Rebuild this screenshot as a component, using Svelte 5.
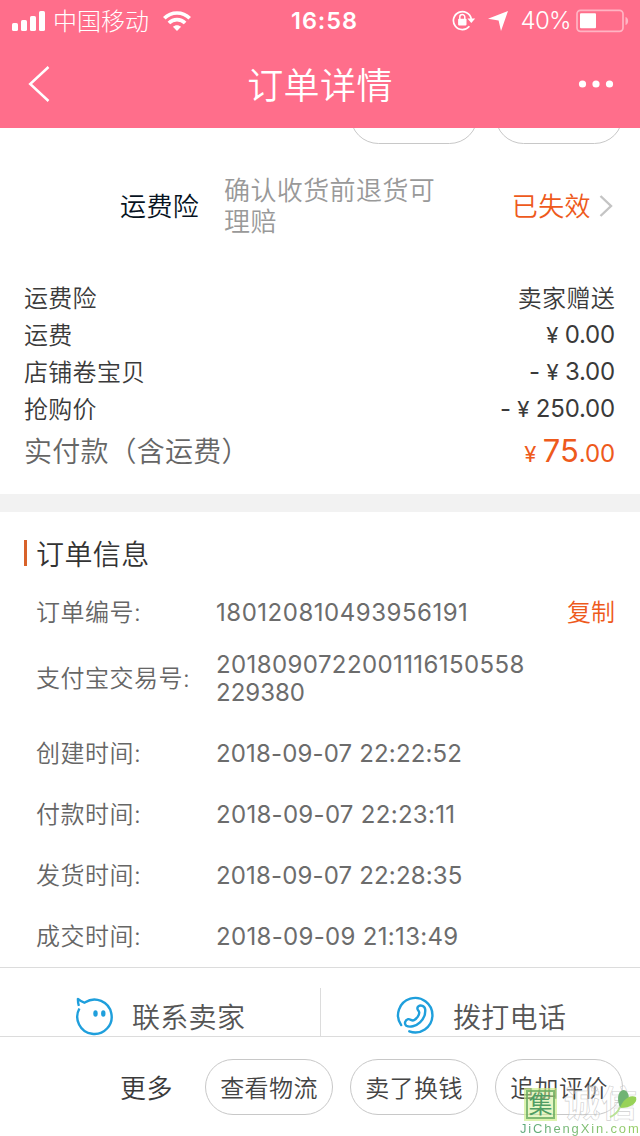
<script>
  const costs = [
    { label: '运费险', text: '卖家赠送' },
    { label: '运费', sign: '', amount: '0.00' },
    { label: '店铺卷宝贝', sign: '-', amount: '3.00' },
    { label: '抢购价', sign: '-', amount: '250.00' }
  ];
  const times = [
    { label: '创建时间:', value: '2018-09-07 22:22:52', track: 0.16 },
    { label: '付款时间:', value: '2018-09-07 22:23:11', track: 0.3 },
    { label: '发货时间:', value: '2018-09-07 22:28:35', track: 0.16 },
    { label: '成交时间:', value: '2018-09-09 21:13:49', track: 0.32 }
  ];
  const actions = ['查看物流', '卖了换钱', '追加评价'];
</script>

<div class="screen">
  <header>
    <div class="status">
      <div class="left">
        <svg width="33" height="20" viewBox="0 0 33 20" fill="#fff">
          <rect x="0" y="12" width="6" height="8" rx="1.6" />
          <rect x="9" y="9" width="6" height="11" rx="1.6" />
          <rect x="18" y="5" width="6" height="15" rx="1.6" />
          <rect x="27" y="0" width="6" height="20" rx="1.6" />
        </svg>
        <span class="carrier">中国移动</span>
        <svg class="wifi" width="28" height="20" viewBox="0 0 28 20" fill="none" stroke="#fff" stroke-width="3.7">
          <path d="M1.3 7.3C8.4 0.2 19.6 0.2 26.7 7.3" />
          <path d="M5.9 12C10.4 7.5 17.6 7.5 22.1 12" />
          <path d="M14 20l-4.1-4.2c2.3-2.2 5.9-2.2 8.2 0z" fill="#fff" stroke="none" />
        </svg>
      </div>
      <div class="clock">16:58</div>
      <div class="right">
        <svg width="24" height="22" viewBox="0 0 24 22" fill="none" stroke="#fff" stroke-width="1.7">
          <path d="M17.4 16.3A9 9 0 1 1 19.300 9" />
          <path d="M15.4 8.600h7.8l-3.9 4.4z" fill="#fff" stroke="none" />
          <rect x="6.100" y="8.800" width="8.400" height="6.600" rx=".8" fill="#fff" stroke="none" />
          <path d="M7.800 10V7a2.500 2.500 0 0 1 5 0V10" stroke-width="1.500" />
        </svg>
        <svg class="arrow" width="20" height="20" viewBox="0 0 20 20" fill="#fff"><path d="M20 0L13 20L10.6 9.4L0 7.8z" /></svg>
        <span class="percent">40%</span>
        <svg width="53" height="24" viewBox="0 0 53 24">
          <rect x="1" y="1.3" width="46" height="21" rx="3.5" fill="none" stroke="#ffb4c3" stroke-width="1.7" />
          <rect x="4" y="4.2" width="16" height="15" rx="1" fill="#fff" />
          <path d="M49.500 8C53 9 53 15 49.500 16z" fill="#ffb4c3" />
        </svg>
      </div>
    </div>
    <div class="nav">
      <svg width="24" height="40" viewBox="0 0 24 40" fill="none" stroke="#fff" stroke-width="2.5"><path d="M20.500 3L2.200 20L20.500 37" /></svg>
      <h1>订单详情</h1>
      <svg width="36" height="8" viewBox="0 0 36 8" fill="#fff"><circle cx="4.500" cy="4" r="3.600" /><circle cx="18" cy="4" r="3.600" /><circle cx="31.500" cy="4" r="3.600" /></svg>
    </div>
  </header>

  <div class="peek"><i></i><i></i></div>

  <section class="insurance">
    <b>运费险</b>
    <p>确认收货前退货可理赔</p>
    <em>已失效</em>
    <svg width="14" height="24" viewBox="0 0 14 24" fill="none" stroke="#c4c4c4" stroke-width="2.400"><path d="M1.500 2L12 12L1.500 22" /></svg>
  </section>

  <section class="costs">
    {#each costs as c}
      <div class="cost">
        <span class="cjk">{c.label}</span>
        {#if c.text}
          <span class="cjk">{c.text}</span>
        {:else}
          <span class="num">{c.sign}<span class="yen">¥</span>{c.amount}</span>
        {/if}
      </div>
    {/each}
    <div class="total">
      <span>实付款（含运费）</span>
      <span class="paid"><span class="yen">¥</span><strong>75</strong>.00</span>
    </div>
  </section>

  <div class="band"></div>

  <section class="info">
    <h2>订单信息</h2>
    <div class="row">
      <span class="label">订单编号:</span><span class="value id">180120810493956191</span><span class="copy">复制</span>
    </div>
    <div class="row trade">
      <span class="label">支付宝交易号:</span>
      <span class="value"><span class="first">2018090722001116150558</span><br />229380</span>
    </div>
    {#each times as t}
      <div class="row"><span class="label">{t.label}</span><span class="value" style="letter-spacing: {t.track}px">{t.value}</span></div>
    {/each}
  </section>

  <div class="contact">
    <div class="way">
      <svg width="40" height="40" viewBox="0 0 40 40" fill="none" stroke="#1f9fdc" stroke-width="2.400" stroke-linejoin="round">
        <path d="M4.400 12.500A17.200 17.200 0 1 0 10.200 6.300L9.300 6.700C7 6 5 4.600 2.900 2.900C2.900 5 3 7.500 3.900 9.900" />
        <ellipse cx="20.500" cy="17.500" rx="2.200" ry="3.300" fill="#1f9fdc" stroke="none" />
        <ellipse cx="28.300" cy="17.500" rx="2.200" ry="3.300" fill="#1f9fdc" stroke="none" />
      </svg>
      <span>联系卖家</span>
    </div>
    <div class="way">
      <svg width="40" height="40" viewBox="0 0 40 40" fill="none" stroke="#1f9fdc" stroke-width="2.400" stroke-linecap="round" stroke-linejoin="round">
        <path d="M5.200 29.100A17.200 17.200 0 1 1 13.300 35.300" />
        <path d="M22.300 10.400C24.600 8.700 28.800 9.800 29.200 13.500C29.600 18 27.500 23 24 26.400C20 30.300 13.500 31.700 10.300 29.700C7.800 27.700 9.300 23.900 12.100 23.200C14.400 22.700 15.600 25.300 18 24.200C20.800 22.700 23.600 18.600 23.200 16.200C22.800 14.400 19.700 13.100 22.300 10.400Z" />
      </svg>
      <span>拨打电话</span>
    </div>
  </div>

  <footer>
    <span class="more">更多</span>
    {#each actions as a}<button>{a}</button>{/each}
  </footer>

  <div class="mark">
    <div class="names">
      <span class="seal">集</span><span class="hollow">诚信</span>
      <svg class="leaf" width="30" height="32" viewBox="0 0 30 32">
        <path d="M11 20C8 12 8 4 14 2C19 2 21 8 19 13z" fill="#70b374" />
        <path d="M11 20C13 13 20 6 27 9C29 15 22 20 11 20z" fill="#98d258" />
        <path d="M11 19C9 24 6 27 1 29" fill="none" stroke="#b9e296" stroke-width="2" />
      </svg>
    </div>
    <div class="site">JiChengXin.com</div>
  </div>
</div>

<style>
  :global(body) { margin: 0; background: #fff; }
  .screen {
    position: relative; width: 640px; height: 1136px; overflow: hidden; background: #fff;
    font-family: Inter, "Noto Sans CJK SC", sans-serif; font-weight: 350; color: #3a3a3a;
    display: flex; flex-direction: column; box-sizing: border-box;
  }
  svg { display: block; flex: none; }
  h1, h2, p { margin: 0; font-weight: 350; }
  header { height: 128px; background: #ff6e8b; color: #fff; flex: none; }
  .status { height: 40px; display: grid; grid-template-columns: 1fr auto 1fr; align-items: center; padding: 0 12px; }
  .left, .right { display: flex; align-items: center; }
  .right { justify-content: flex-end; }
  .right svg:last-child { margin-right: -1px; }
  .carrier { font-size: 24px; line-height: 40px; padding-top: 1px; margin-left: 8px; font-weight: 300; }
  .wifi { margin-left: 14px; }
  .clock { font-size: 23.500px; font-weight: 600; line-height: 42px; letter-spacing: .9px; padding-left: 9px; }
  .arrow { margin: 0 0 1px 12px; }
  .percent { font-size: 24px; line-height: 42px; margin: 0 5px 0 12px; letter-spacing: -.6px; font-weight: 350; }
  .nav { height: 88px; display: flex; align-items: center; justify-content: space-between; padding: 0 26px 0 28px; }
  .nav h1 { font-size: 36px; line-height: 50px; letter-spacing: .4px; padding: 3px 0 0 10px; }
  .peek { height: 16px; overflow: hidden; display: flex; gap: 17px; padding-left: 350px; align-items: flex-end; flex: none; }
  .peek i { width: 126px; height: 55px; border: 1px solid #c8c8c8; border-radius: 29px; flex: none; }
  .insurance { height: 123px; display: flex; align-items: center; padding: 0 27px 0 120px; font-size: 26px; flex: none; }
  .insurance b { font-weight: 350; color: #07131f; width: 104px; padding-bottom: 3px; letter-spacing: .4px; }
  .insurance p { width: 216px; line-height: 31px; color: #999; letter-spacing: .4px; }
  .insurance em { font-style: normal; color: #ee5a1c; margin: 0 8px 0 auto; padding-bottom: 3px; letter-spacing: .4px; }
  .costs { padding: 12px 25px 0 24px; height: 215px; flex: none; }
  .cost { height: 37px; line-height: 39px; display: flex; justify-content: space-between; font-size: 24px; }
  .cjk { letter-spacing: .3px; }
  .num { font-weight: 400; letter-spacing: -.2px; line-height: 38px; }
  .yen { display: inline-block; width: 25px; text-align: center; font-size: .92em; }
  .total { height: 49px; line-height: 51px; display: flex; justify-content: space-between; font-size: 28px; color: #666; }
  .total > span { letter-spacing: .2px; }
  .total .paid { color: #ee5a1c; font-size: 24px; line-height: 47px; font-weight: 400; letter-spacing: -.1px; }
  .paid strong { font-size: 31px; font-weight: 400; }
  .band { height: 18px; background: #f2f2f2; flex: none; }
  .info { height: 455px; color: #666; flex: none; }
  h2 { font-size: 28px; line-height: 30px; height: 26px; margin: 28px 0 16px 24px; border-left: 3px solid #d8622a; padding-left: 9px; color: #333; letter-spacing: .4px; }
  .row { height: 61px; display: flex; align-items: center; padding: 0 25px 0 36px; font-size: 24px; line-height: 28px; }
  .row.trade { height: 72px; margin-bottom: 8px; }
  .label { width: 180px; letter-spacing: .5px; }
  .value { flex: 1; font-weight: 400; color: #6c6c6c; }
  .id { letter-spacing: .52px; }
  .first { letter-spacing: .4px; }
  .copy { color: #ee5a1c; }
  .contact { border-top: 1px solid #dcdcdc; border-bottom: 1px solid #dcdcdc; height: 68px; display: grid; grid-template-columns: 1fr 1fr; align-items: end; flex: none; }
  .way { height: 48px; display: flex; align-items: center; padding: 8px 0 0 75px; box-sizing: border-box; gap: 17px; font-size: 28px; color: #555; letter-spacing: .3px; }
  .way + .way { border-left: 1px solid #dcdcdc; }
  .way span { padding-bottom: 1px; }
  footer { height: 99px; display: flex; align-items: center; padding-left: 120px; flex: none; }
  .more { font-size: 26px; width: 85px; letter-spacing: .4px; }
  button { width: 128px; height: 56px; margin: 1px 17px 0 0; padding: 0 0 2px; border: 1px solid #c8c8c8; border-radius: 29px; background: #fff; font: inherit; font-size: 24px; letter-spacing: .4px; color: #444; flex: none; }
  .mark { position: absolute; left: 520px; top: 1088px; width: 120px; height: 48px; }
  .names { display: flex; height: 32px; align-items: center; }
  .seal { width: 25px; height: 25px; margin-left: 6px; outline: 2px solid rgba(205, 238, 140, .7); border: 2px solid rgba(110, 175, 100, .85); background: rgba(205, 238, 140, .5); font-size: 24px; line-height: 25px; text-align: center; color: #4f9d63; font-weight: 400; }
  .hollow { margin-left: 9px; font-size: 36px; line-height: 32px; font-weight: 700; letter-spacing: 1px; color: rgba(255, 255, 255, .35); -webkit-text-stroke: .6px rgba(190, 190, 190, .75); }
  .leaf { position: absolute; left: 89px; top: 0; }
  .site { font-family: "Liberation Sans", sans-serif; font-size: 13px; line-height: 18px; letter-spacing: 1.850px; font-weight: 400; white-space: nowrap; background: linear-gradient(90deg, #5ba77c, #98cf65); background-clip: text; color: transparent; }
</style>
